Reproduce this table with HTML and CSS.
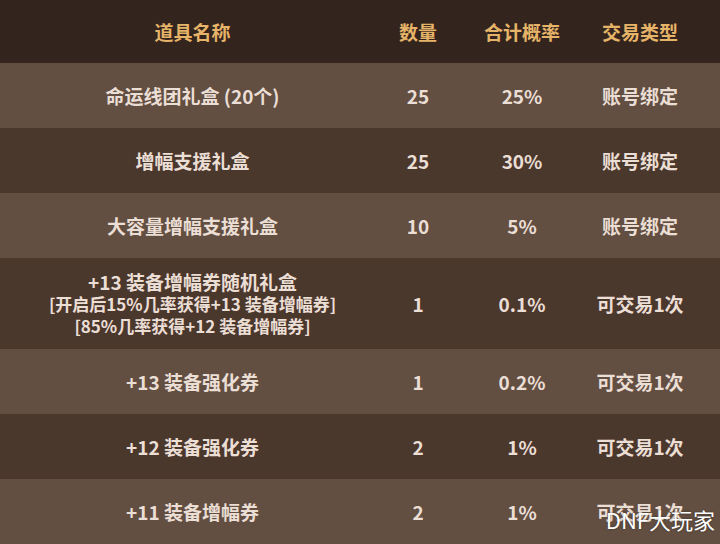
FILE: index.html
```html
<!DOCTYPE html>
<html lang="zh-CN">
<head>
<meta charset="utf-8">
<title>道具概率表</title>
<link rel="stylesheet" href="styles.css">
</head>
<body>
<div class="table">
  <div class="row head">
    <div class="cell">道具名称</div>
    <div class="cell">数量</div>
    <div class="cell">合计概率</div>
    <div class="cell">交易类型</div>
  </div>
  <div class="row light">
    <div class="cell">命运线团礼盒 (20个)</div>
    <div class="cell">25</div>
    <div class="cell">25%</div>
    <div class="cell">账号绑定</div>
  </div>
  <div class="row dark">
    <div class="cell">增幅支援礼盒</div>
    <div class="cell">25</div>
    <div class="cell">30%</div>
    <div class="cell">账号绑定</div>
  </div>
  <div class="row light">
    <div class="cell">大容量增幅支援礼盒</div>
    <div class="cell">10</div>
    <div class="cell">5%</div>
    <div class="cell">账号绑定</div>
  </div>
  <div class="row dark tall">
    <div class="cell multi">
      <span class="main">+13 装备增幅券随机礼盒</span>
      <span class="sub">[开启后15%几率获得+13 装备增幅券]</span>
      <span class="sub">[85%几率获得+12 装备增幅券]</span>
    </div>
    <div class="cell">1</div>
    <div class="cell">0.1%</div>
    <div class="cell">可交易1次</div>
  </div>
  <div class="row light">
    <div class="cell">+13 装备强化券</div>
    <div class="cell">1</div>
    <div class="cell">0.2%</div>
    <div class="cell">可交易1次</div>
  </div>
  <div class="row dark">
    <div class="cell">+12 装备强化券</div>
    <div class="cell">2</div>
    <div class="cell">1%</div>
    <div class="cell">可交易1次</div>
  </div>
  <div class="row light last">
    <div class="cell">+11 装备增幅券</div>
    <div class="cell">2</div>
    <div class="cell">1%</div>
    <div class="cell">可交易1次</div>
  </div>
  <div class="watermark">DNF大玩家</div>
</div>
</body>
</html>
```

FILE: styles.css
```css
html, body {
  margin: 0;
  padding: 0;
  background: #624f42;
}
body {
  width: 720px;
  height: 544px;
  overflow: hidden;
  font-family: "Noto Sans CJK SC", "Noto Sans", sans-serif;
}
.table {
  position: relative;
  width: 720px;
}
.row {
  display: grid;
  grid-template-columns: 385px 66px 142px 94px;
  height: 65px;
  align-items: center;
  color: #ebded5;
  font-size: 19px;
  font-weight: 700;
}
.row.head {
  height: 63px;
  background: #33241e;
  color: #e6b468;
  font-size: 19px;
}
.row.light { background: #624f42; }
.row.dark { background: #4b382d; }
.row.tall { height: 91px; }
.row.last { height: 64px; }
.cell {
  text-align: center;
  white-space: nowrap;
  display: flex;
  justify-content: center;
  align-items: center;
}
.cell.multi {
  flex-direction: column;
}
.cell.multi .main,
.cell.multi .sub {
  display: block;
  height: 22px;
  line-height: 22px;
}
.cell.multi .main { font-size: 19px; }
.cell.multi .sub { font-size: 17px; }
.watermark {
  position: absolute;
  right: 5px;
  bottom: 8px;
  color: #ffffff;
  font-size: 22px;
  font-weight: 400;
  text-shadow: 0 0 2px rgba(0,0,0,0.5);
}
```
